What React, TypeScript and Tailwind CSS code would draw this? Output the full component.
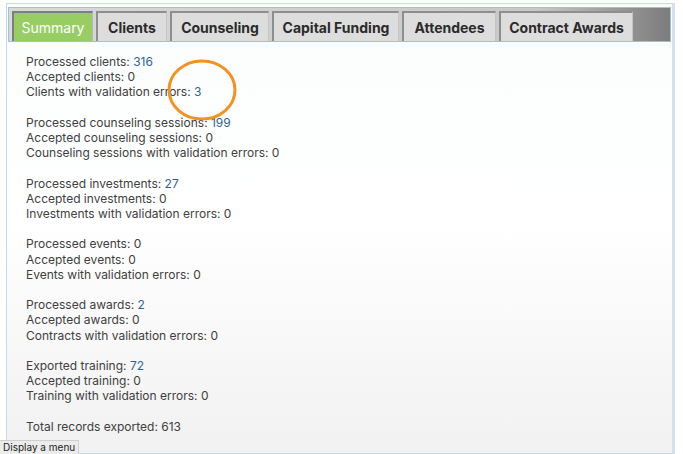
import React from 'react'

const tabs = [
  { label: 'Summary', w: 'w-[81px]' },
  { label: 'Clients', w: 'w-[71px]' },
  { label: 'Counseling', w: 'w-[99px]' },
  { label: 'Capital Funding', w: 'w-[127px]' },
  { label: 'Attendees', w: 'w-[94px]' },
  { label: 'Contract Awards', w: 'w-[134px]' },
]

type Line = { text: string; value: string; link?: boolean }

const groups: Line[][] = [
  [
    { text: 'Processed clients: ', value: '316', link: true },
    { text: 'Accepted clients: ', value: '0' },
    { text: 'Clients with validation errors: ', value: '3', link: true },
  ],
  [
    { text: 'Processed counseling sessions: ', value: '199', link: true },
    { text: 'Accepted counseling sessions: ', value: '0' },
    { text: 'Counseling sessions with validation errors: ', value: '0' },
  ],
  [
    { text: 'Processed investments: ', value: '27', link: true },
    { text: 'Accepted investments: ', value: '0' },
    { text: 'Investments with validation errors: ', value: '0' },
  ],
  [
    { text: 'Processed events: ', value: '0' },
    { text: 'Accepted events: ', value: '0' },
    { text: 'Events with validation errors: ', value: '0' },
  ],
  [
    { text: 'Processed awards: ', value: '2', link: true },
    { text: 'Accepted awards: ', value: '0' },
    { text: 'Contracts with validation errors: ', value: '0' },
  ],
  [
    { text: 'Exported training: ', value: '72', link: true },
    { text: 'Accepted training: ', value: '0' },
    { text: 'Training with validation errors: ', value: '0' },
  ],
]

export default function App() {
  return (
    <div className="relative w-[683px] h-[454px] overflow-hidden bg-white font-['Inter',sans-serif]">
      <div className="ml-[6px] mt-[3px] w-[669px] h-[451px] border border-[#c6d9ea] border-r-[3px] border-r-[#d4e0ea] bg-gradient-to-b from-[#fbfdfd] via-white to-[#f1f1f1] pl-[1px] pt-[3px] pr-[1px]">
        {/* Tab strip */}
        <div className="h-[35px] flex items-end gap-[3px] pl-[3px] border border-[#9ebfdd] border-b-[#9ebfdd] bg-gradient-to-r from-[#d9d9d9] via-[#c8c8c8] via-80% to-[#7c7c7c]">
          {tabs.map((t, i) => (
            <div
              key={t.label}
              className={
                i === 0
                  ? `${t.w} h-[30px] flex items-center justify-center bg-[#98cd63] border-t-2 border-l-2 border-[#7e7e7e] border-r border-r-[#b9b9b9] text-white text-[14px] font-['Helvetica','Liberation Sans',sans-serif]`
                  : `${t.w} h-[30px] flex items-center justify-center bg-[#dddddd] border-t-2 border-l-2 border-[#8e8e8e] border-r border-r-[#c4c4c4] text-[#2b2b2b] font-bold text-[14px] font-['Helvetica','Liberation Sans',sans-serif]`
              }
            >
              {t.label}
            </div>
          ))}
        </div>

        {/* Summary body */}
        <div className="pl-[18px] pt-[12px] text-[12px] leading-[15.2px] text-[#404040]">
          {groups.map((g, gi) => (
            <div key={gi} className="mb-[15.2px]">
              {g.map((l) => (
                <div key={l.text}>
                  {l.text}
                  <span className={l.link ? 'text-[#2f6395]' : ''}>{l.value}</span>
                </div>
              ))}
            </div>
          ))}
          <div>Total records exported: 613</div>
        </div>
      </div>

      {/* annotation circle */}
      <svg className="absolute left-[166px] top-[58px]" width="72" height="64" viewBox="0 0 72 64">
        <ellipse cx="36" cy="32" rx="33" ry="29" fill="none" stroke="#f39220" strokeWidth="3" />
      </svg>

      {/* tooltip */}
      <div className="absolute left-0 top-[440px] h-[14px] px-[3px] bg-[#ececec] border-t border-r border-[#cfcfcf] text-[10px] leading-[13px] text-[#222] font-['Helvetica','Liberation Sans',sans-serif]">
        Display a menu
      </div>
    </div>
  )
}
